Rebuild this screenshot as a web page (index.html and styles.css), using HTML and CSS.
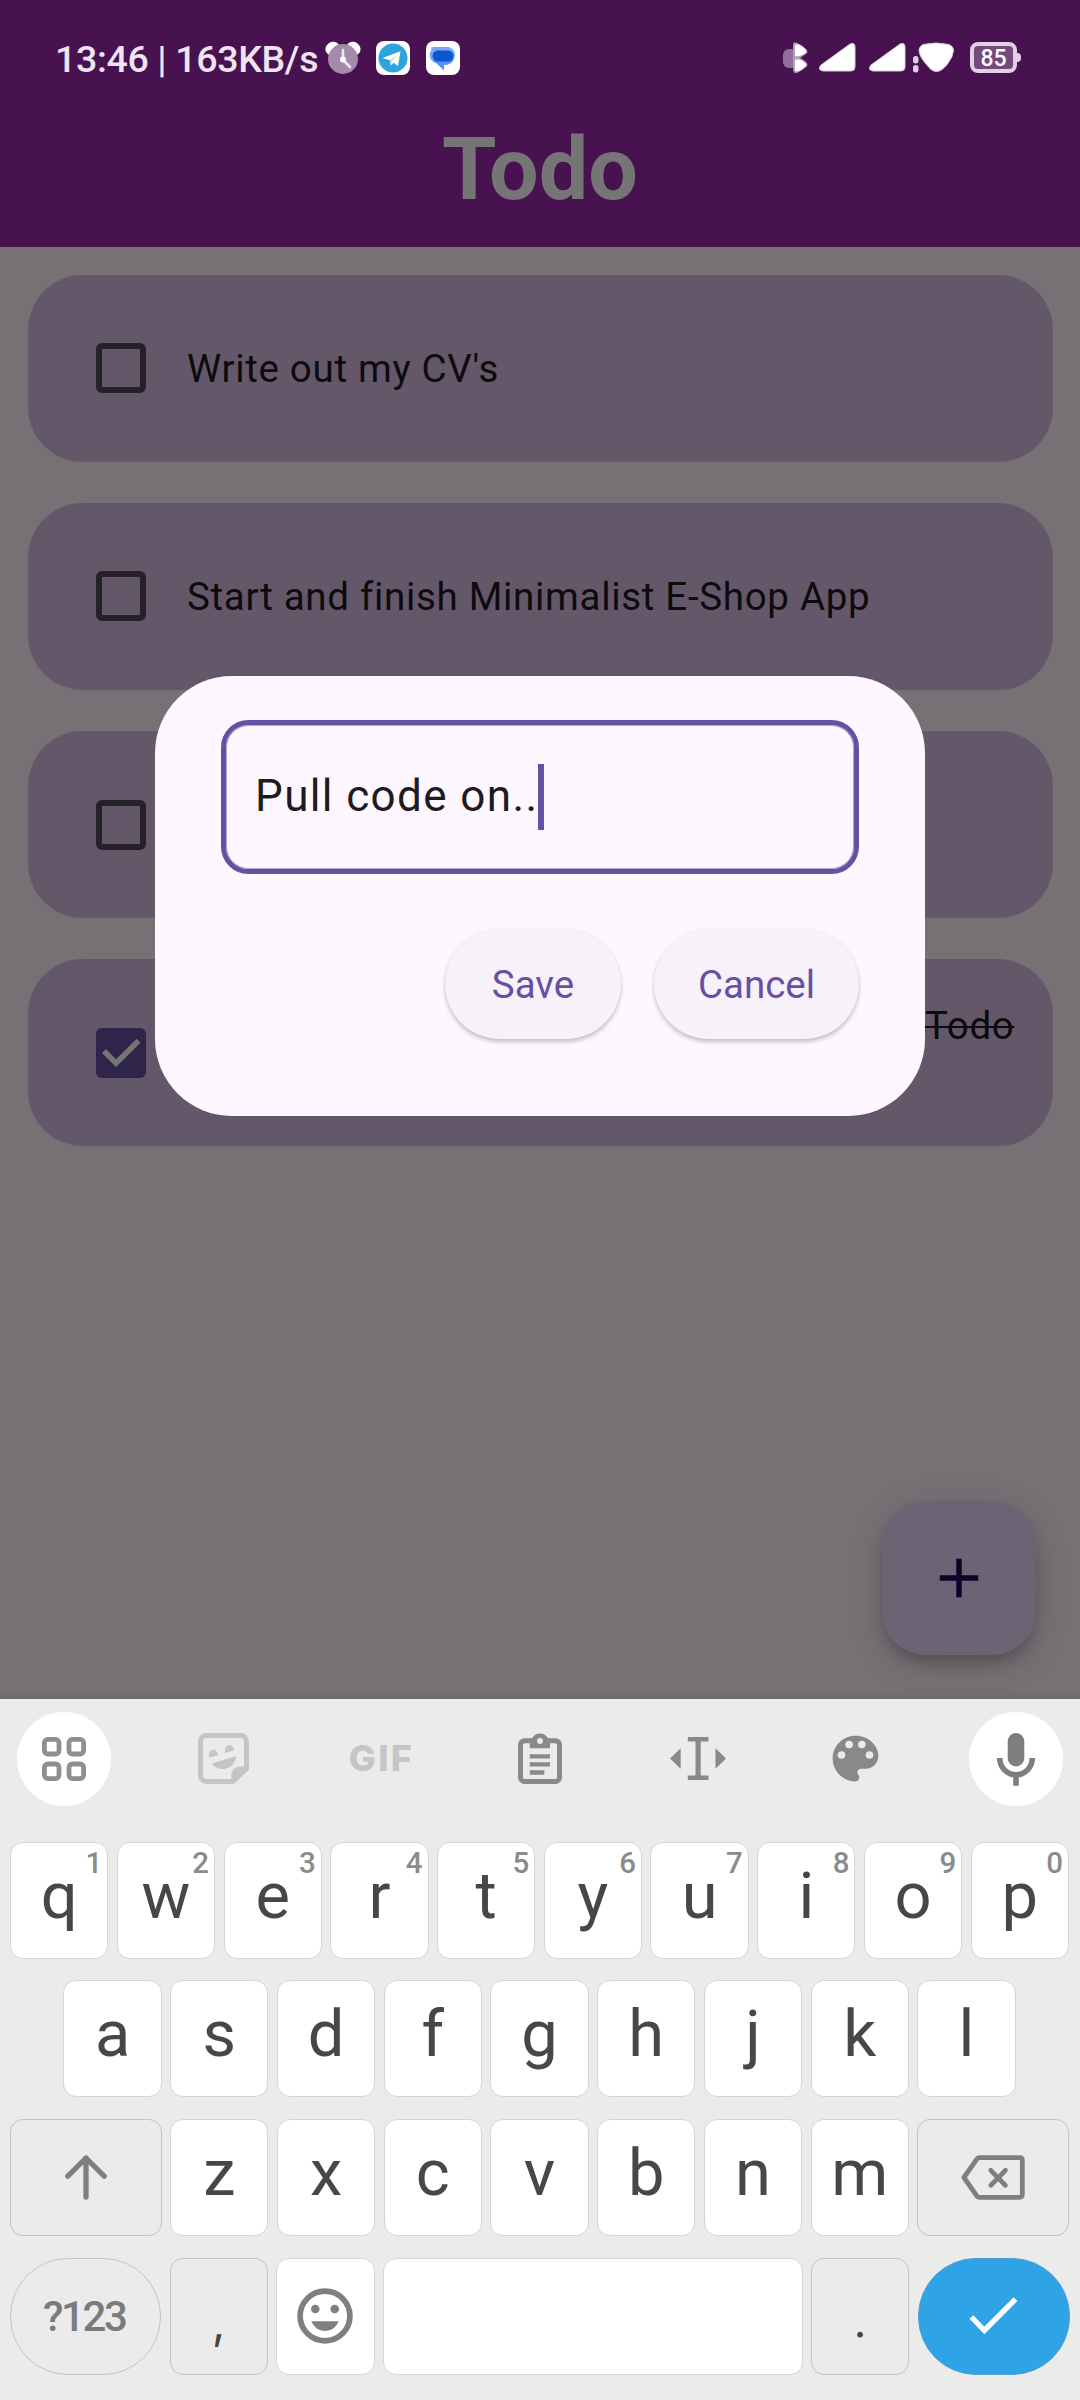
FILE: index.html
```html
<!DOCTYPE html>
<html lang="en">
<head>
<meta charset="utf-8">
<title>Todo</title>
<link rel="stylesheet" href="styles.css">
</head>
<body>
<div class="screen">
  <div class="app">
    <header class="header">
      <div class="status">
        <span class="clock">13:46 | 163KB/s</span>
        <svg class="alarm" width="36" height="34" viewBox="0 0 36 34">
          <ellipse cx="7.500" cy="7.500" rx="7.300" ry="6.500" fill="#fff" transform="rotate(-35 7.500 7.500)"/>
          <ellipse cx="28.500" cy="7.500" rx="7.300" ry="6.500" fill="#fff" transform="rotate(35 28.500 7.500)"/>
          <circle cx="18" cy="18" r="15" fill="#a68aab"/>
          <path d="M18 9v10l7 7" fill="none" stroke="#f1e6f3" stroke-width="2.600" stroke-linecap="round"/>
          <circle cx="18" cy="18.500" r="3" fill="#fff"/>
        </svg>
        <svg class="telegram" width="34" height="34" viewBox="0 0 34 34">
          <rect width="34" height="34" rx="8" fill="#fff"/>
          <circle cx="17" cy="17" r="14.500" fill="#2fa3db"/>
          <path d="M6.500 17 24.500 10.300 22 25 17.500 21.800 15 24.500 13.800 19.300z" fill="#fff"/>
          <path d="M13.800 19.300 21.500 13.800 15.800 20.300 15 24.500z" fill="#b5d9ee"/>
        </svg>
        <svg class="messages" width="34" height="34" viewBox="0 0 34 34">
          <rect width="34" height="34" rx="8" fill="#fff"/>
          <path d="M12 6h9a8 8 0 0 1 0 16H10.500A8 8 0 0 1 5.500 9Q4 6 8 6z" fill="#7ba4fb"/>
          <path d="M8 18h20q-2.500 6-10 6v5.500L8 20z" fill="#5a8ffb"/>
          <rect x="6.500" y="9.500" width="21" height="11" rx="5.500" fill="#0b57d0"/>
        </svg>
        <span class="spacer"></span>
        <svg class="bluetooth" width="26" height="34" viewBox="0 0 26 34">
          <rect x="1" y="8" width="14" height="19" rx="6" fill="#916f98"/>
          <path d="M12 1.500q4-1 12 6.500 3 3 0 5-3 2-6 4 3 1 6 4 3 3 0 5-7 6-11 6-2 0-2-6V7q0-5 1-5.500z" fill="#b99fbe"/>
          <path d="M13 4q5-2 10 4 3 3-1 5-5 3-9 2zM13 19q4-2 9 2 4 3 1 5-5 5-10 4z" fill="#fff"/>
        </svg>
        <svg class="signal" width="38" height="31" viewBox="0 0 38 31">
          <path d="M3 23 32 2q5-2 5 3v20q0 4-4 4H5q-6-1-2-6z" fill="#fff" stroke="#d9cbdc"/>
        </svg>
        <svg class="signal signal-2" width="38" height="31" viewBox="0 0 38 31">
          <path d="M3 23 32 2q5-2 5 3v20q0 4-4 4H5q-6-1-2-6z" fill="#fff" stroke="#d9cbdc"/>
        </svg>
        <svg class="wifi" width="42" height="32" viewBox="0 0 42 32">
          <rect y="14" width="5.500" height="7.500" rx="2.700" fill="#dccfdf"/>
          <rect y="23" width="5.500" height="7.500" rx="2.700" fill="#dccfdf"/>
          <path d="M6 8q0-3 4-5.500 13-3 26 0 4.500 2 4.500 5.500 0 6-6 14-6 7.500-11 7.500-5 0-10-7Q6 14 6 8z" fill="#fff" stroke="#d9cbdc"/>
        </svg>
        <div class="battery"><span class="level">85</span><i class="tip"></i></div>
      </div>
      <h1 class="title">Todo</h1>
    </header>

    <ul class="list">
      <li class="card"><span class="box"></span><span class="label">Write out my CV's</span></li>
      <li class="card"><span class="box"></span><span class="label">Start and finish Minimalist E-Shop App</span></li>
      <li class="card"><span class="box"></span></li>
      <li class="card">
        <span class="box checked"><svg width="50" height="50" viewBox="0 0 50 50"><path d="M8 23 20 35.200 42.500 12.700" fill="none" stroke="#757575" stroke-width="5.500"/></svg></span>
        <span class="label done"><s>Todo</s></span>
      </li>
    </ul>

    <div class="fab"><svg width="40" height="40" viewBox="0 0 40 40"><path d="M20 .8V39.200M.8 20H39.200" stroke="#12002b" stroke-width="5.500"/></svg></div>

    <div class="dialog">
      <div class="field"><span class="value">Pull code on..</span><i class="caret"></i></div>
      <div class="actions">
        <div class="button save">Save</div>
        <div class="button cancel">Cancel</div>
      </div>
    </div>
  </div>

  <div class="keyboard">
    <div class="tools">
      <div class="tool first"><span class="disc">
        <svg width="44" height="44" viewBox="0 0 44 44" fill="none" stroke="#8f8f8f" stroke-width="4.800"><rect x="2.400" y="2.400" width="14.600" height="14.600" rx="3.500"/><rect x="27" y="2.400" width="14.600" height="14.600" rx="3.500"/><rect x="2.400" y="27" width="14.600" height="14.600" rx="3.500"/><rect x="27" y="27" width="14.600" height="14.600" rx="3.500"/></svg>
      </span></div>
      <div class="tool">
        <svg width="51" height="51" viewBox="0 0 51 51" fill="#c5c5c5"><path d="M8.500 2.500H42.500a6 6 0 0 1 6 6V35.500L35 48.500H8.500a6 6 0 0 1-6-6V8.500a6 6 0 0 1 6-6z" fill="none" stroke="#c5c5c5" stroke-width="5"/><path d="M33.200 50V43a9 9 0 0 1 9-9.500H50v3L36 50z"/><path d="M11 24.500C10 14 20 15 20 22zM27 20C26 9.500 36 10.500 36 17.500zM14 30.500 38 23.300C38 31 31.500 36 25 36c-5 0-9-2-11-5.500z"/></svg>
      </div>
      <div class="tool gif">GIF</div>
      <div class="tool">
        <svg width="44" height="51" viewBox="0 0 44 51" fill="#898989"><rect x="2.500" y="7.700" width="39" height="40.800" rx="4" fill="none" stroke="#898989" stroke-width="5"/><path d="M11.800 15.300V5.500H14a9 9 0 0 1 16 0H32v9.800z"/><circle cx="22" cy="8" r="2.900" fill="#ebebeb"/><path d="M11.800 21.300H32v4.300H11.800zM11.800 29.300H32v4.300H11.800zM11.800 37.300H26.300v4.500H11.800z"/></svg>
      </div>
      <div class="tool">
        <svg width="56" height="43" viewBox="0 0 56 43" fill="#898989"><path d="M0 21.500 10.700 11.300V31.800zM56 21.500 45.500 11.300V31.800zM17.800 0H38.500V4.500H30.700V38.500H38.500V43H17.800V38.500H25.500V4.500H17.800z"/></svg>
      </div>
      <div class="tool">
        <svg width="61" height="61" viewBox="0 0 24 24"><path fill="#898989" d="M12 3c-4.970 0-9 4.030-9 9s4.030 9 9 9c.83 0 1.500-.67 1.500-1.500 0-.39-.15-.74-.39-1.010-.23-.26-.38-.61-.38-.99 0-.83.67-1.500 1.500-1.500H16c2.760 0 5-2.240 5-5 0-4.420-4.030-8-9-8z"/><g fill="#ebebeb"><circle cx="6.500" cy="10.600" r="1.500"/><circle cx="9.500" cy="6.500" r="1.500"/><circle cx="14.500" cy="6.500" r="1.500"/><circle cx="17.500" cy="10.600" r="1.500"/></g></svg>
      </div>
      <div class="tool last"><span class="disc">
        <svg width="38" height="53" viewBox="0 0 38 53"><rect x="10.700" width="16.600" height="33.500" rx="8.300" fill="#7e7e7e"/><path d="M2.700 24.900a16.300 17 0 0 0 32.600 0M19 43v9.800" fill="none" stroke="#7e7e7e" stroke-width="5.600"/></svg>
      </span></div>
    </div>

    <div class="keys">
      <div class="row">
        <div class="key">q<sup class="hint">1</sup></div><div class="key">w<sup class="hint">2</sup></div><div class="key">e<sup class="hint">3</sup></div><div class="key">r<sup class="hint">4</sup></div><div class="key">t<sup class="hint">5</sup></div><div class="key">y<sup class="hint">6</sup></div><div class="key">u<sup class="hint">7</sup></div><div class="key">i<sup class="hint">8</sup></div><div class="key">o<sup class="hint">9</sup></div><div class="key">p<sup class="hint">0</sup></div>
      </div>
      <div class="row">
        <div class="key">a</div><div class="key">s</div><div class="key">d</div><div class="key">f</div><div class="key">g</div><div class="key">h</div><div class="key">j</div><div class="key">k</div><div class="key">l</div>
      </div>
      <div class="row">
        <div class="key wide grey icon"><svg width="42" height="45" viewBox="0 0 42 45"><path d="M21 42V3M2.800 21.200 21 3 39.200 21.200" fill="none" stroke="#7f7f7f" stroke-width="5.300" stroke-linecap="round" stroke-linejoin="round"/></svg></div>
        <div class="key">z</div><div class="key">x</div><div class="key">c</div><div class="key">v</div><div class="key">b</div><div class="key">n</div><div class="key">m</div>
        <div class="key wide grey icon"><svg width="64" height="45" viewBox="0 0 64 45" fill="none" stroke="#7f7f7f" stroke-width="4.800" stroke-linejoin="round"><path d="M2.900 22.500 16 3.800q1-1.200 2.500-1.200H59a2.300 2.300 0 0 1 2.300 2.300V40a2.300 2.300 0 0 1-2.300 2.300H18.500q-1.500 0-2.500-1.200z"/><path d="M29.800 15.300 44.400 30.300M44.400 15.300 29.800 30.300" stroke-linecap="round"/></svg></div>
      </div>
      <div class="row">
        <div class="key wide grey round symbols">?123</div>
        <div class="key grey mark">,</div>
        <div class="key icon"><svg width="56" height="56" viewBox="0 0 56 56" fill="#7f7f7f"><circle cx="28" cy="28" r="24.900" fill="none" stroke="#7f7f7f" stroke-width="5.700"/><circle cx="18.300" cy="21" r="4.300"/><circle cx="37.700" cy="21" r="4.300"/><path d="M14.200 33.300H41.800Q37.500 43 28 43T14.200 33.300z"/></svg></div>
        <div class="key space"></div>
        <div class="key grey mark dot">.</div>
        <div class="key wide round enter icon"><svg width="49" height="38" viewBox="0 0 49 38"><path d="M2.400 20 15.400 33.500 46.500 2.200" fill="none" stroke="#fff" stroke-width="5.400"/></svg></div>
      </div>
    </div>
  </div>
</div>
</body>
</html>
```
FILE: styles.css
```css
* { box-sizing: border-box; }
body { margin: 0; font-family: Roboto, sans-serif; }
svg { display: block; flex: none; }

.screen {
  width: 1080px;
  height: 2400px;
  display: flex;
  flex-direction: column;
  overflow: hidden;
}

.app {
  position: relative;
  height: 1699px;
  background: linear-gradient(transparent 1688px, rgba(60, 60, 70, .12)) #767175;
}

/* header */
.header { height: 247px; background: #481150; }
.status {
  display: flex;
  align-items: center;
  height: 115px;
  padding: 0 59px 0 55px;
}
.clock {
  width: 270px;
  font-size: 37.500px;
  font-weight: 500;
  line-height: 44px;
  letter-spacing: -.35px;
  color: #efe4f1;
  white-space: nowrap;
  padding-top: 3px;
}
.telegram { margin-left: 15px; }
.messages { margin-left: 16px; }
.spacer { flex: 1; }
.signal { margin-left: 10px; }
.signal-2 { margin-left: 12px; }
.wifi { margin-left: 7px; }
.battery {
  display: flex;
  align-items: center;
  width: 51px;
  height: 31px;
  margin-left: 15px;
}
.level {
  width: 47px;
  height: 31px;
  border: 4px solid #e0d2e3;
  border-radius: 8px;
  background: #734a7a;
  color: #fff;
  font-size: 23px;
  font-weight: 500;
  line-height: 25px;
  text-align: center;
}
.tip { width: 4px; height: 9px; border-radius: 0 4px 4px 0; background: #e0d2e3; }
.title {
  margin: 0;
  padding-top: 1px;
  font-size: 88px;
  font-weight: 700;
  line-height: 106px;
  text-align: center;
  color: #757575;
}

/* todo list */
.list {
  display: flex;
  flex-direction: column;
  gap: 41.250px;
  margin: 0;
  padding: 27.500px 27.500px;
  list-style: none;
}
.card {
  display: flex;
  align-items: center;
  gap: 41px;
  height: 187px;
  padding: 0 38px 0 68.500px;
  border-radius: 55px;
  background: #65576a;
}
.box {
  flex: none;
  width: 50px;
  height: 50px;
  border: 6px solid #252128;
  border-radius: 6px;
}
.box.checked { border: 0; background: #2f254a; }
.label {
  font-size: 38.500px;
  line-height: 55px;
  letter-spacing: .69px;
  color: #0c0b0d;
}
.done { flex: 1; height: 110px; text-align: right; }
.done s { padding-left: 10px; text-decoration-thickness: 2px; }

.fab {
  position: absolute;
  left: 882px;
  top: 1501px;
  width: 154px;
  height: 154px;
  display: grid;
  place-items: center;
  border-radius: 44px;
  background: #6b6474;
  box-shadow: 0 10px 16px -3px rgba(0, 0, 0, .22), 0 8px 34px rgba(0, 0, 0, .14);
}

/* dialog */
.dialog {
  position: absolute;
  left: 155px;
  top: 676px;
  width: 770px;
  height: 440px;
  padding: 44px 66px;
  border-radius: 77px;
  background: #fef7ff;
}
.field {
  display: flex;
  align-items: center;
  height: 154px;
  padding-left: 28px;
  border: 5px solid #6750a4;
  border-radius: 27.500px;
  box-shadow: inset 0 0 0 1px #b3a5d2;
}
.value { font-size: 44px; letter-spacing: 1.375px; color: #1d1b20; margin: -2px 0 0 1px; }
.caret { width: 6px; height: 66px; background: #6750a4; }
.actions {
  display: flex;
  justify-content: flex-end;
  gap: 33px;
  margin-top: 54px;
}
.button {
  height: 110px;
  margin-top: 1px;
  border-radius: 55px;
  background: #f7f2fa;
  box-shadow: 0 3px 4px rgba(0, 0, 0, .22), 0 0 2px rgba(0, 0, 0, .06);
  color: #6750a4;
  font-size: 38.500px;
  line-height: 111px;
  text-align: center;
}
.save { width: 176px; }
.cancel { width: 205px; }

/* keyboard */
.keyboard { height: 701px; background: #ebebeb; color: #474747; font-family: Roboto, sans-serif; }
.tools {
  display: grid;
  grid-template-columns: 144.500px repeat(5, 158px) 1fr;
  height: 120px;
}
.tool { display: flex; align-items: center; justify-content: center; padding-bottom: 2px; }
.first { justify-content: flex-start; padding: 0 0 0 17px; }
.last { justify-content: flex-end; padding: 0 17px 0 0; }
.disc {
  display: grid;
  place-items: center;
  width: 94px;
  height: 94px;
  border-radius: 50%;
  background: #fff;
}
.gif { font-family: Inter, sans-serif; font-size: 36px; font-weight: 800; letter-spacing: 2.300px; color: #c5c5c5; }
.keys {
  display: flex;
  flex-direction: column;
  gap: 21.700px;
  padding: 22.500px 10.500px 0 9.500px;
}
.row { display: flex; justify-content: center; gap: 8.450px; }
.key {
  position: relative;
  flex: none;
  display: flex;
  align-items: center;
  justify-content: center;
  width: 98.300px;
  height: 117px;
  padding-bottom: 8px;
  border: 1px solid #d5d5d5;
  border-radius: 13px;
  background: #fff;
  font-size: 65px;
  line-height: 75px;
}
.wide { width: 151.600px; }
.grey { background: #ebebeb; border-color: #c3c3c3; }
.icon { padding: 0; }
.round { border-radius: 58px; }
.space { flex: 1; }
.enter { background: #2ea4e6; border-color: #4f9fcf; }
.hint {
  position: absolute;
  right: 5px;
  top: 2px;
  font-size: 29.500px;
  font-weight: 500;
  line-height: 36px;
  color: #8b8b8b;
}
.symbols {
  padding: 0 2px 0 0;
  font-size: 42px;
  font-weight: 500;
  letter-spacing: -2.400px;
  color: #7b7b7b;
}
.mark { padding: 12px 0 0; font-family: Inter, sans-serif; font-size: 46px; }
.dot { font-family: Roboto, sans-serif; font-size: 52px; padding-top: 6px; }
```
